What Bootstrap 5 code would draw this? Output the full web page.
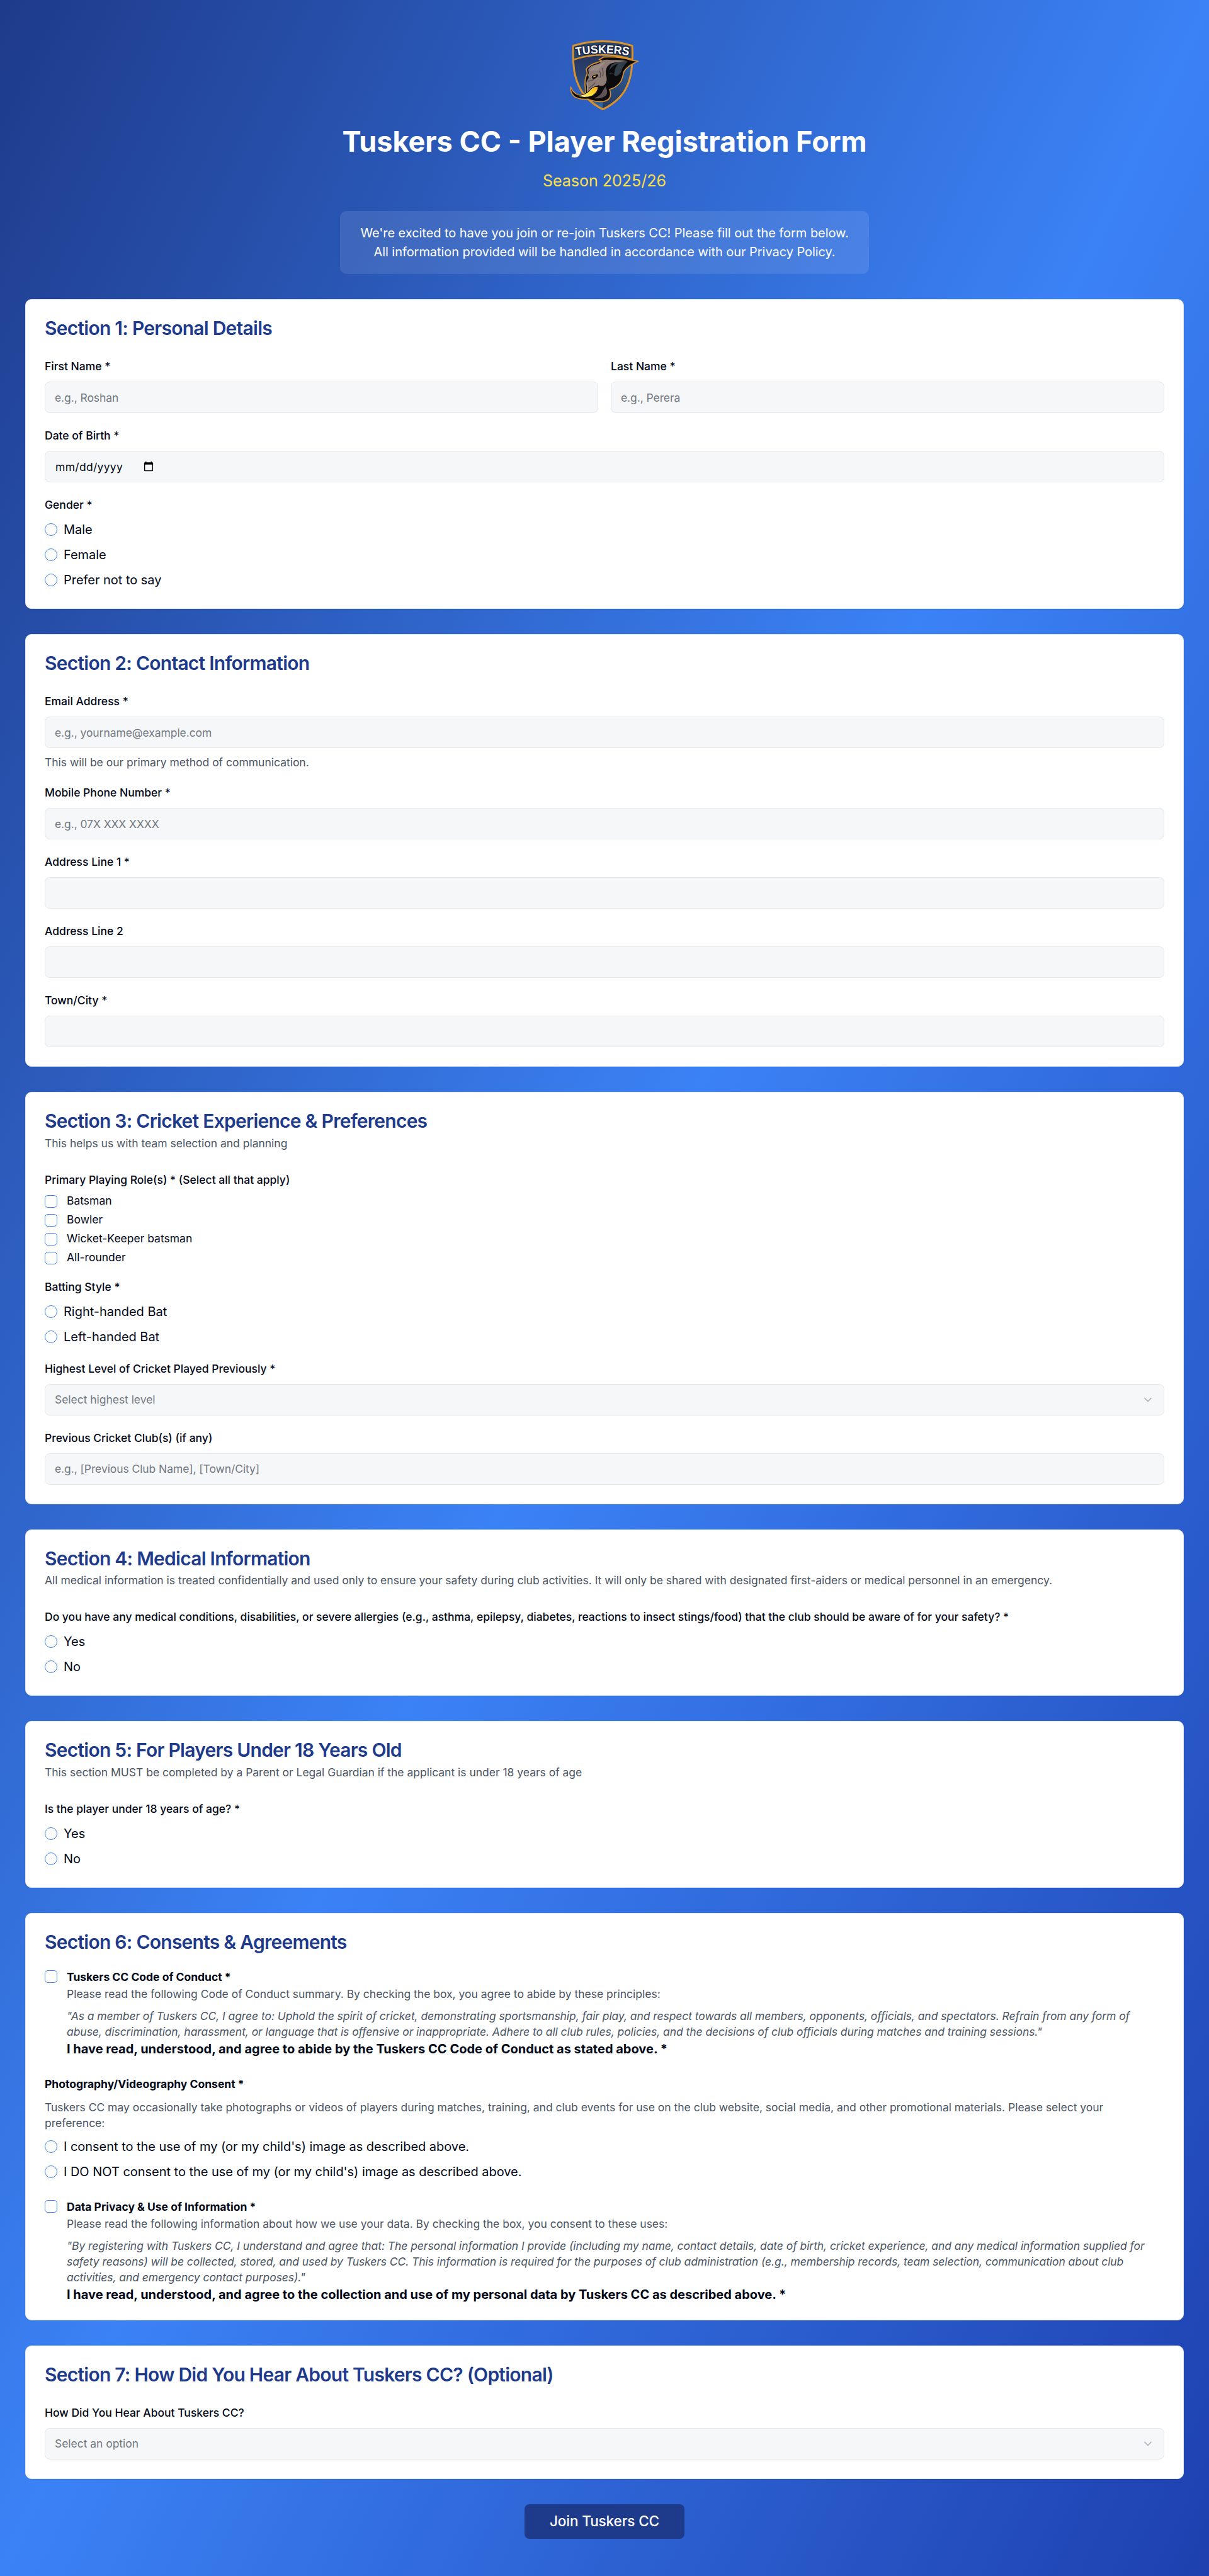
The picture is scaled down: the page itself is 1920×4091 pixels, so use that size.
<!DOCTYPE html>
<html lang="en">
<head>
<meta charset="utf-8">
<meta name="viewport" content="width=device-width, initial-scale=1">
<title>Tuskers CC - Player Registration Form</title>
<link href="https://cdn.jsdelivr.net/npm/bootstrap@5.3.0/dist/css/bootstrap.min.css" rel="stylesheet">
<style>
:root{font-size:20px}
body{font-family:Inter,"Liberation Sans",sans-serif;font-size:1rem;line-height:1.5;color:#020817;min-height:4091px;background:linear-gradient(to bottom right,#1e3a8a,#3b82f6,#1e40af) no-repeat}
.page-wrap{padding:60px 40px 59px}
.crest{width:120px;height:120px}
.page-title{font-size:45px;line-height:50px;font-weight:700}
.season{font-size:25px;line-height:35px;color:#fde047}
.intro{width:840px;background:rgba(255,255,255,.1);border-radius:10px;color:#fff;letter-spacing:-.055px}
.stack-40{display:flex;flex-direction:column;gap:40px}
.section-card{border:1px solid #e2e8f0;border-radius:10px;background:#fff;padding:30px;box-shadow:0 1px 2px rgba(0,0,0,.05);color:inherit}
.section-title{font-size:30px;line-height:1;font-weight:600;letter-spacing:-.025em;color:#1e3a8a;margin:0}
.section-head{display:flex;flex-direction:column;gap:7.5px;margin-bottom:30px}
.fields{display:flex;flex-direction:column;gap:20px}
.fields.wide{gap:30px}
.field{display:flex;flex-direction:column;gap:10px}
.field-label{font-size:17.5px;line-height:1;font-weight:500;display:inline}
.hint{font-size:17.5px;line-height:25px;color:#4b5563;margin:0;letter-spacing:-.012px}
.form-control,.form-control:focus{height:50px;padding:0 15px;font-size:17.5px;line-height:25px;background:#f5f7f9;border:1px solid #e5e7eb;border-radius:8px;color:#020817;box-shadow:none}
.form-control::placeholder{color:#737981;opacity:1;letter-spacing:-.08px}
.form-control.pick{color:#737981;letter-spacing:-.04px}
.form-control.date-control{padding:10px 16px;letter-spacing:.3px}
.form-check-input{width:20px;height:20px;margin:0;float:none;flex:none;border:1px solid #3b82f6;background-color:#fff}
.form-check-input[type=checkbox]{border-radius:5px}
.choice{letter-spacing:-.03px}
.tick-label{font-size:17.5px;line-height:1}
.consent{display:flex;gap:15px;align-items:flex-start;line-height:1}
.consent-text{display:flex;flex-direction:column;gap:5px}
.consent-text .quote{font-style:italic;margin-top:5px;letter-spacing:-.065px}
.btn-join{height:55px;padding:0 40px;font-size:22.5px;font-weight:500;letter-spacing:-.1px;color:#fff;background:#1e3a8a;border:0;border-radius:8px}
.btn-join:hover{background:#1e40af;color:#fff}
</style>
<script src="https://cdn.jsdelivr.net/npm/bootstrap@5.3.0/dist/js/bootstrap.bundle.min.js"></script>
</head>
<body>
<div class="page-wrap">
  <header class="text-center text-white d-flex flex-column align-items-center mb-0">
    <svg class="crest mb-3" viewBox="60 30 360 360" role="img" aria-label="Tuskers crest">
      <defs>
        <linearGradient id="field-l" x1="0" y1="0" x2="0" y2="1"><stop offset="0" stop-color="#262f50"/><stop offset=".45" stop-color="#28406f"/><stop offset="1" stop-color="#2d68a8"/></linearGradient>
        <linearGradient id="field-r" x1="0" y1="0" x2="0" y2="1"><stop offset="0" stop-color="#2c69ad"/><stop offset=".5" stop-color="#2a5690"/><stop offset="1" stop-color="#233a60"/></linearGradient>
        <linearGradient id="tusk" x1="0" y1="1" x2="1" y2="0"><stop offset="0" stop-color="#fff6c8"/><stop offset=".5" stop-color="#ffe135"/><stop offset="1" stop-color="#f0a01c"/></linearGradient>
        <path id="arc" d="M105 115 Q232 92 358 115"/>
      </defs>
      <path d="M91 68Q232 25 372 68Q376 130 368 190Q354 272 310 316Q276 350 232 371Q190 350 156 316Q112 272 96 190Q88 130 91 68Z" fill="url(#field-l)"/>
      <path d="M232 46Q310 46 372 68Q376 130 368 190Q354 272 310 316Q276 350 232 371Z" fill="url(#field-r)"/>
      <path d="M91 68Q232 25 372 68L372 134Q232 90 92 134Z" fill="#25466f"/>
      <path d="M91 68Q232 25 372 68Q376 130 368 190Q354 272 310 316Q276 350 232 371Q190 350 156 316Q112 272 96 190Q88 130 91 68Z" fill="none" stroke="#dd9229" stroke-width="9" stroke-linejoin="round"/>
      <path d="M93 134Q160 112 232 111Q310 112 372 134" fill="none" stroke="#dd9229" stroke-width="8"/>
      <text font-family="Liberation Sans, sans-serif" font-weight="700" font-size="55" fill="#fff" stroke="#1b2541" stroke-width="10" paint-order="stroke" stroke-linejoin="round"><textPath href="#arc" textLength="252" lengthAdjust="spacingAndGlyphs">TUSKERS</textPath></text>
      <!-- head silhouette with its gold edge -->
      <path d="M400 142L368 136Q310 118 236 122L214 134Q222 136 228 140L206 148Q172 156 155 176Q152 184 156 192Q160 202 152 214Q146 232 147 250L150 292Q132 304 112 301Q88 290 79 264Q76 294 98 311Q126 326 160 322Q190 336 232 334Q266 330 269 302Q270 288 264 276Q300 266 318 238Q328 218 332 192Q350 162 400 142Z" fill="#0b0b0d" stroke="#dd9229" stroke-width="5" stroke-linejoin="round"/>
      <!-- face -->
      <path d="M230 138Q248 132 270 136L306 140Q270 146 254 166Q244 184 246 200L250 220Q254 240 240 254Q228 264 212 256L196 262Q178 286 160 292Q153 278 156 262Q150 244 158 232Q170 218 160 208Q168 198 162 182Q170 164 196 158Q216 156 230 138Z" fill="#8d7b76"/>
      <path d="M206 160Q184 164 174 178Q178 170 170 192Q190 182 208 186Q222 168 246 146Q228 146 206 160Z" fill="#9c8b85"/>
      <path d="M180 214Q194 202 211 206Q206 222 188 226Q178 224 180 214Z" fill="#0b0b0d"/>
      <path d="M184 217Q192 208 201 211Q195 220 184 217Z" fill="#f2b125"/>
      <path d="M160 236Q176 238 190 228M164 270Q180 262 196 244M216 188Q226 204 218 220M228 174Q238 194 230 214" fill="none" stroke="#54474a" stroke-width="4"/>
      <path d="M156 246Q166 264 158 288" fill="none" stroke="#b5a39c" stroke-width="3"/>
      <!-- ear -->
      <path d="M350 144Q300 138 272 160Q258 182 266 204Q276 190 290 212Q306 214 318 194Q326 166 350 144Z" fill="#323f49"/>
      <path d="M262 186Q276 162 306 152Q288 172 286 206Q276 190 262 200Z" fill="#0b0b0d"/>
      <path d="M352 142Q306 132 266 138Q246 146 236 172Q262 144 352 142Z" fill="#8d7b76"/>
      <path d="M244 262Q260 290 246 306Q226 322 190 318Q222 308 232 282Z" fill="#5d5255"/>
      <!-- tusk -->
      <path d="M210 263Q210 288 182 306Q146 322 104 304Q152 308 180 270Q194 258 210 263Z" fill="url(#tusk)" stroke="#0b0b0d" stroke-width="3"/>
    </svg>
    <h1 class="page-title mb-3">Tuskers CC - Player Registration Form</h1>
    <p class="season mb-0">Season 2025/26</p>
    <div class="intro p-3 mt-4 mb-4">We're excited to have you join or re-join Tuskers CC! Please fill out the form below.<br>All information provided will be handled in accordance with our Privacy Policy.</div>
  </header>

  <form class="stack-40 mt-2">
    <section class="section-card">
      <div class="section-head"><h2 class="section-title">Section 1: Personal Details</h2></div>
      <div class="fields">
        <div class="row g-3">
          <div class="col-6"><div class="field"><div><label class="field-label" for="fn">First Name *</label></div><input id="fn" class="form-control" placeholder="e.g., Roshan"></div></div>
          <div class="col-6"><div class="field"><div><label class="field-label" for="ln">Last Name *</label></div><input id="ln" class="form-control" placeholder="e.g., Perera"></div></div>
        </div>
        <div class="field"><div><label class="field-label" for="dob">Date of Birth *</label></div><input id="dob" type="date" class="form-control date-control d-flex"></div>
        <div class="field"><div><span class="field-label">Gender *</span></div>
          <label class="d-flex align-items-center choice"><input class="form-check-input me-2" type="radio" name="g">Male</label>
          <label class="d-flex align-items-center choice"><input class="form-check-input me-2" type="radio" name="g">Female</label>
          <label class="d-flex align-items-center choice"><input class="form-check-input me-2" type="radio" name="g">Prefer not to say</label>
        </div>
      </div>
    </section>

    <section class="section-card">
      <div class="section-head"><h2 class="section-title">Section 2: Contact Information</h2></div>
      <div class="fields">
        <div class="field"><div><label class="field-label" for="em">Email Address *</label></div><input id="em" class="form-control" placeholder="e.g., yourname@example.com"><p class="hint">This will be our primary method of communication.</p></div>
        <div class="field"><div><label class="field-label" for="ph">Mobile Phone Number *</label></div><input id="ph" class="form-control" placeholder="e.g., 07X XXX XXXX"></div>
        <div class="field"><div><label class="field-label" for="a1">Address Line 1 *</label></div><input id="a1" class="form-control"></div>
        <div class="field"><div><label class="field-label" for="a2">Address Line 2</label></div><input id="a2" class="form-control"></div>
        <div class="field"><div><label class="field-label" for="tc">Town/City *</label></div><input id="tc" class="form-control"></div>
      </div>
    </section>

    <section class="section-card">
      <div class="section-head"><h2 class="section-title">Section 3: Cricket Experience &amp; Preferences</h2><p class="hint">This helps us with team selection and planning</p></div>
      <div class="fields">
        <div class="field"><div><span class="field-label">Primary Playing Role(s) * (Select all that apply)</span></div>
          <label class="consent"><input class="form-check-input" type="checkbox"><span class="tick-label">Batsman</span></label>
          <label class="consent"><input class="form-check-input" type="checkbox"><span class="tick-label">Bowler</span></label>
          <label class="consent"><input class="form-check-input" type="checkbox"><span class="tick-label">Wicket-Keeper batsman</span></label>
          <label class="consent"><input class="form-check-input" type="checkbox"><span class="tick-label">All-rounder</span></label>
        </div>
        <div class="field"><div><span class="field-label">Batting Style *</span></div>
          <label class="d-flex align-items-center choice"><input class="form-check-input me-2" type="radio" name="b">Right-handed Bat</label>
          <label class="d-flex align-items-center choice"><input class="form-check-input me-2" type="radio" name="b">Left-handed Bat</label>
        </div>
        <div class="field"><div><span class="field-label">Highest Level of Cricket Played Previously *</span></div>
          <button type="button" class="form-control pick d-flex justify-content-between align-items-center"><span>Select highest level</span><svg width="20" height="20" viewBox="0 0 24 24" fill="none" stroke="#020817" stroke-opacity=".3" stroke-width="2" stroke-linecap="round" stroke-linejoin="round"><path d="m6 9 6 6 6-6"/></svg></button>
        </div>
        <div class="field"><div><label class="field-label" for="pc">Previous Cricket Club(s) (if any)</label></div><input id="pc" class="form-control" placeholder="e.g., [Previous Club Name], [Town/City]"></div>
      </div>
    </section>

    <section class="section-card">
      <div class="section-head"><h2 class="section-title">Section 4: Medical Information</h2><p class="hint">All medical information is treated confidentially and used only to ensure your safety during club activities. It will only be shared with designated first-aiders or medical personnel in an emergency.</p></div>
      <div class="field"><div><span class="field-label">Do you have any medical conditions, disabilities, or severe allergies (e.g., asthma, epilepsy, diabetes, reactions to insect stings/food) that the club should be aware of for your safety? *</span></div>
        <label class="d-flex align-items-center choice"><input class="form-check-input me-2" type="radio" name="m">Yes</label>
        <label class="d-flex align-items-center choice"><input class="form-check-input me-2" type="radio" name="m">No</label>
      </div>
    </section>

    <section class="section-card">
      <div class="section-head"><h2 class="section-title">Section 5: For Players Under 18 Years Old</h2><p class="hint">This section MUST be completed by a Parent or Legal Guardian if the applicant is under 18 years of age</p></div>
      <div class="field"><div><span class="field-label">Is the player under 18 years of age? *</span></div>
        <label class="d-flex align-items-center choice"><input class="form-check-input me-2" type="radio" name="u">Yes</label>
        <label class="d-flex align-items-center choice"><input class="form-check-input me-2" type="radio" name="u">No</label>
      </div>
    </section>

    <section class="section-card">
      <div class="section-head"><h2 class="section-title">Section 6: Consents &amp; Agreements</h2></div>
      <div class="fields wide">
        <div class="consent"><input id="coc" class="form-check-input" type="checkbox">
          <div class="consent-text">
            <div><label for="coc" class="field-label fw-bold">Tuskers CC Code of Conduct *</label></div>
            <p class="hint">Please read the following Code of Conduct summary. By checking the box, you agree to abide by these principles:</p>
            <p class="hint quote">"As a member of Tuskers CC, I agree to: Uphold the spirit of cricket, demonstrating sportsmanship, fair play, and respect towards all members, opponents, officials, and spectators. Refrain from any form of abuse, discrimination, harassment, or language that is offensive or inappropriate. Adhere to all club rules, policies, and the decisions of club officials during matches and training sessions."</p>
            <div class="fw-bold">I have read, understood, and agree to abide by the Tuskers CC Code of Conduct as stated above. *</div>
          </div>
        </div>
        <div class="field"><div><span class="field-label fw-bold">Photography/Videography Consent *</span></div>
          <p class="hint">Tuskers CC may occasionally take photographs or videos of players during matches, training, and club events for use on the club website, social media, and other promotional materials. Please select your preference:</p>
          <label class="d-flex align-items-center choice"><input class="form-check-input me-2" type="radio" name="p">I consent to the use of my (or my child's) image as described above.</label>
          <label class="d-flex align-items-center choice"><input class="form-check-input me-2" type="radio" name="p">I DO NOT consent to the use of my (or my child's) image as described above.</label>
        </div>
        <div class="consent"><input id="dp" class="form-check-input" type="checkbox">
          <div class="consent-text">
            <div><label for="dp" class="field-label fw-bold">Data Privacy &amp; Use of Information *</label></div>
            <p class="hint">Please read the following information about how we use your data. By checking the box, you consent to these uses:</p>
            <p class="hint quote">"By registering with Tuskers CC, I understand and agree that: The personal information I provide (including my name, contact details, date of birth, cricket experience, and any medical information supplied for safety reasons) will be collected, stored, and used by Tuskers CC. This information is required for the purposes of club administration (e.g., membership records, team selection, communication about club activities, and emergency contact purposes)."</p>
            <div class="fw-bold">I have read, understood, and agree to the collection and use of my personal data by Tuskers CC as described above. *</div>
          </div>
        </div>
      </div>
    </section>

    <section class="section-card">
      <div class="section-head"><h2 class="section-title">Section 7: How Did You Hear About Tuskers CC? (Optional)</h2></div>
      <div class="field"><div><span class="field-label">How Did You Hear About Tuskers CC?</span></div>
        <button type="button" class="form-control pick d-flex justify-content-between align-items-center"><span>Select an option</span><svg width="20" height="20" viewBox="0 0 24 24" fill="none" stroke="#020817" stroke-opacity=".3" stroke-width="2" stroke-linecap="round" stroke-linejoin="round"><path d="m6 9 6 6 6-6"/></svg></button>
      </div>
    </section>

    <div class="d-flex justify-content-center"><button type="button" class="btn btn-join">Join Tuskers CC</button></div>
  </form>
</div>
</body>
</html>
